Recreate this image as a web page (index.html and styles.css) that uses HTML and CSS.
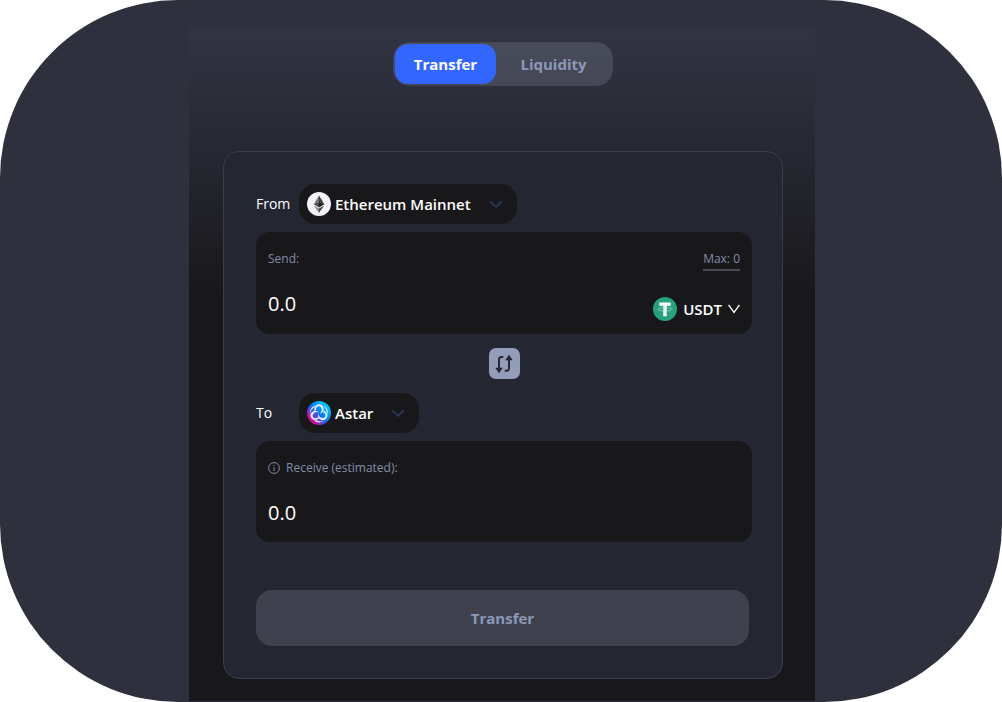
FILE: index.html
```html
<!DOCTYPE html>
<html lang="en">
<head>
<meta charset="utf-8">
<meta name="viewport" content="width=device-width, initial-scale=1">
<title>Transfer</title>
<link rel="stylesheet" href="styles.css">
</head>
<body>
<div class="stage">
  <main class="panel">
    <nav class="tabs">
      <button class="tab tab-active" type="button">Transfer</button>
      <button class="tab" type="button">Liquidity</button>
    </nav>
    <form class="card">
      <div class="chain-row">
        <span class="chain-label" id="from-label">From</span>
        <button class="chain" type="button" aria-describedby="from-label">
          <svg class="coin" viewBox="0 0 24 24" aria-hidden="true">
            <circle cx="12" cy="12" r="12" fill="#f3f4f8"/>
            <path d="M12 3.500 6.700 12.200 12 9.800z" fill="#777"/>
            <path d="M12 3.500 17.300 12.200 12 9.800z" fill="#3b3b3b"/>
            <path d="M6.700 12.200 12 9.800v5.600z" fill="#4a4a4a"/>
            <path d="M17.300 12.200 12 9.800v5.600z" fill="#1d1d1d"/>
            <path d="M6.700 13.400 12 16.600v4.200z" fill="#858585"/>
            <path d="M17.300 13.400 12 16.600v4.200z" fill="#444"/>
          </svg>
          <span class="chain-name">Ethereum Mainnet</span>
          <svg class="chevron" viewBox="0 0 14 8" aria-hidden="true"><path d="M1 1.200 7 6.800 13 1.200"/></svg>
        </button>
      </div>
      <section class="box box-send">
        <div class="box-head">
          <label for="send">Send:</label>
          <button class="max" type="button">Max: 0</button>
        </div>
        <div class="box-main">
          <input class="amount" id="send" type="text" value="0.0">
          <button class="token" type="button">
            <svg class="coin" viewBox="0 0 24 24" aria-hidden="true">
              <circle cx="12" cy="12" r="12" fill="#26a17b"/>
              <path d="M6.300 5.600h11.400v3.200h-4v10.400h-3.400V8.800h-4z" fill="#fff"/>
              <ellipse cx="12" cy="12.300" rx="7.200" ry="1.700" fill="none" stroke="#b9e0d2" stroke-width=".6"/>
            </svg>
            <span>USDT</span>
            <svg class="caret" viewBox="0 0 12 10" aria-hidden="true"><path d="M.6 1 6 8.500 11.400 1"/></svg>
          </button>
        </div>
      </section>
      <button class="swap" type="button" aria-label="Swap direction">
        <svg viewBox="0 0 20 20" aria-hidden="true">
          <path class="swap-line" d="M9.300 3H7.500Q5 3 5 5.500V15M10.700 16.800h1.800q2.500 0 2.500-2.500V4.500"/>
          <path class="swap-head" d="M1.300 13.800h7.400L5 19.300zM11.300 6.200h7.400L15 .7z"/>
        </svg>
      </button>
      <div class="chain-row">
        <span class="chain-label" id="to-label">To</span>
        <button class="chain" type="button" aria-describedby="to-label">
          <svg class="coin" viewBox="0 0 24 24" aria-hidden="true">
            <defs>
              <linearGradient id="astar" x1=".1" y1=".8" x2=".8" y2=".1">
                <stop offset="0" stop-color="#e6007a"/>
                <stop offset=".22" stop-color="#8b2bd0"/>
                <stop offset=".48" stop-color="#0a72ec"/>
                <stop offset="1" stop-color="#00c8f8"/>
              </linearGradient>
            </defs>
            <circle cx="12" cy="12" r="12" fill="url(#astar)"/>
            <g fill="#d9efff">
              <g id="astar-arm">
                <path d="M7.400 9.800C7.200 5.600 9 3.200 12 3.200s5 2.200 4.700 5.300c-.2 2.300-1.800 3.900-4.300 4.300 1.700-1.300 2.500-2.700 2.300-4.400C14.500 6.500 13.500 5.300 12 5.300c-2 0-3 1.500-3 4.300z"/>
                <path d="M16.300 4.300c3.300 1.700 5 5 4.500 8.800l-1.300-1.800c-.1-2.600-1.200-4.900-3.200-7z"/>
              </g>
              <use href="#astar-arm" transform="rotate(120 12 12.300)"/>
              <use href="#astar-arm" transform="rotate(240 12 12.300)"/>
            </g>
          </svg>
          <span class="chain-name">Astar</span>
          <svg class="chevron" viewBox="0 0 14 8" aria-hidden="true"><path d="M1 1.200 7 6.800 13 1.200"/></svg>
        </button>
      </div>
      <section class="box">
        <div class="box-head">
          <label for="receive">
            <svg class="info" viewBox="0 0 12 12" aria-hidden="true">
              <circle cx="6" cy="6" r="5.400"/><path d="M6 5.200V9M6 3v1"/>
            </svg>
            Receive (estimated):
          </label>
        </div>
        <div class="box-main">
          <input class="amount" id="receive" type="text" value="0.0" readonly>
        </div>
      </section>
      <button class="submit" type="button">Transfer</button>
    </form>
  </main>
</div>
</body>
</html>
```
FILE: styles.css
```css
* {
  box-sizing: border-box;
}

body {
  margin: 0;
  background: #fff;
  color: #fff;
  font-family: "Open Sans", "Noto Sans", sans-serif;
  font-size: 15px;
  line-height: 20px;
}

button,
input {
  margin: 0;
  padding: 0;
  border: 0;
  background: none;
  color: inherit;
  font: inherit;
}

button {
  cursor: pointer;
}

svg {
  display: block;
  flex: none;
}

.stage {
  display: flex;
  justify-content: center;
  min-height: 100vh;
  padding: 27px 0 1px 2px;
  border-radius: 178px;
  background: #2f303d;
}

.panel {
  display: flex;
  flex-direction: column;
  align-items: center;
  gap: 65px;
  width: 100%;
  max-width: 626px;
  padding: 15px 32px 22px 34px;
  background: linear-gradient(#323443 0, #262731 130px, #18181a 268px);
}

.tabs {
  display: flex;
  height: 44px;
  padding: 1px;
  border: 1px solid #434553;
  border-radius: 16px;
  background: linear-gradient(#474b5a, #454756);
}

.tab {
  width: 115px;
  border-radius: 13px;
  color: #8c98b8;
  font-weight: 700;
}

.tab-active {
  width: 101px;
  background: #3366ff;
  color: #fff;
}

.card {
  display: flex;
  flex-direction: column;
  width: 100%;
  padding: 32px 30px 32px 32px;
  border: 1px solid #3b3d49;
  border-radius: 16px;
  background: #242631;
}

.chain-row {
  display: flex;
  align-items: center;
  margin-bottom: 8px;
}

.chain-label {
  width: 43px;
  font-size: 14px;
}

.chain {
  display: flex;
  align-items: center;
  height: 40px;
  padding: 0 14px 0 8px;
  border-radius: 16px;
  background: #18181a;
}

.coin {
  width: 24px;
  height: 24px;
}

.chain-name {
  margin: 0 18px 0 4px;
  font-weight: 600;
}

.chevron {
  width: 14px;
  height: 8px;
}

.chevron path {
  fill: none;
  stroke: #2b3554;
  stroke-width: 2;
}

.box {
  padding: 17px 12px 14px;
  border-radius: 14px;
  background: #18181a;
}

.box-head {
  display: flex;
  justify-content: space-between;
  align-items: flex-start;
  margin-bottom: 18px;
  color: #848ba9;
  font-size: 12px;
}

.box-head label {
  display: flex;
  align-items: center;
  gap: 6px;
  font-weight: 500;
}

.max {
  height: 22px;
  margin-bottom: -2px;
  border-bottom: 2px solid #474a58;
}

.info {
  width: 12px;
  height: 12px;
  fill: none;
  stroke: #848ba9;
}

.box-main {
  display: flex;
  justify-content: space-between;
  height: 32px;
}

.box-send .box-main {
  height: 33px;
}

.amount {
  flex: 1;
  min-width: 0;
  height: 32px;
  font-size: 20px;
}

.token {
  display: flex;
  align-items: center;
  gap: 6px;
  height: 44px;
  font-weight: 600;
}

.caret {
  width: 12px;
  height: 10px;
}

.caret path {
  fill: none;
  stroke: #fff;
  stroke-width: 1.3;
}

.swap {
  display: grid;
  place-items: center;
  align-self: center;
  width: 31px;
  height: 31px;
  margin: 14px 0;
  border-radius: 7px;
  background: #929db9;
}

.swap svg {
  width: 20px;
  height: 20px;
}

.swap-line {
  fill: none;
  stroke: #242631;
  stroke-width: 2;
}

.swap-head {
  fill: #242631;
}

.submit {
  height: 56px;
  margin: 48px 3px 0 0;
  border-radius: 16px;
  background: #3f414f;
  color: #8c98b8;
  font-weight: 700;
}
```
